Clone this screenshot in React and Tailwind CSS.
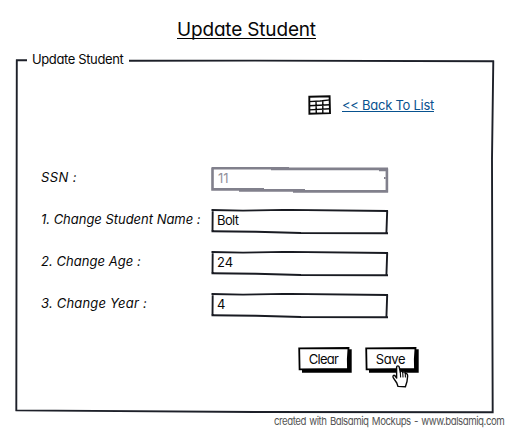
import React from "react";

// Slightly crooked outline of a text field, drawn behind its value.
function FieldOutline({ disabled }) {
  return (
    <svg className="absolute inset-0" width="178" height="27" viewBox="0 0 178 27" fill="none">
      {disabled ? (
        <g stroke="#81808c" strokeWidth="2.6">
          <path d="M0.5 1.3 H78 M60 1.9 H177 M175.9 1.5 V25.6 M1.5 1 V23.5 M0.3 22.4 H53 M28 23.4 H94 M82 24.4 H177" />
          <path d="M168 3.4 H175 M173.8 10 V12" strokeWidth="1.6" />
        </g>
      ) : (
        <g stroke="#191b22" strokeWidth="1.9">
          <path d="M0.5 1 L32 1.6 L75 0.9 L177 2 M176.2 1.6 L175.4 24.6 M1.7 1 L1.5 23 M0.5 22.3 L45 22.8 L90 24 L177 24.2" />
        </g>
      )}
    </svg>
  );
}

function Field({ label, labelClass, value, valueClass, disabled }) {
  return (
    <div className="flex h-[27px] items-start">
      <span className={"w-[170px] whitespace-nowrap italic " + labelClass}>{label}</span>
      <div className={"relative h-[27px] w-[178px] pt-px pl-[6px] " + (disabled ? "text-[#92919b]" : "")}>
        <FieldOutline disabled={disabled} />
        <span className={"relative block " + valueClass}>{value}</span>
      </div>
    </div>
  );
}

function Button({ children, className }) {
  return (
    <button className="relative h-[27px] w-[54px] pr-[3px] pb-[3px] text-center leading-[20px]">
      <svg className="absolute inset-0" width="54" height="27" viewBox="0 0 54 27">
        <path d="M4 3 L53.7 2.3 V25.8 H4 Z" fill="#000" />
        <path d="M1.2 1.3 L50.5 1 L49.8 12 L50 22 L1.6 22.4 Z" fill="#fff" stroke="#000" strokeWidth="1.8" />
      </svg>
      <span className={"relative " + className}>{children}</span>
    </button>
  );
}

function TableIcon() {
  return (
    <svg width="24" height="21" viewBox="0 0 24 21" fill="none" stroke="#080808">
      <path d="M1.3 1.8 L21.6 1.3 L22 18.1 L1.4 18.8 Z" strokeWidth="1.9" />
      <path d="M1 6.6 L12 6 L22 4.9 M1 10.8 L22 9.8 M1 14.9 L22 13.8 M8 6 L8.3 19 M14.8 5 L14.8 19" strokeWidth="1.4" />
    </svg>
  );
}

function HandCursor() {
  return (
    <svg className="absolute top-[18px] left-[27px]" width="17" height="24" viewBox="0 0 17 24" fill="#fff" stroke="#080808" strokeWidth="1.4" strokeLinejoin="round" strokeLinecap="round">
      <path d="M4.6 12.2 L4.6 2.2 C4.8 .5 6.8 .5 7.2 2 L8.3 7 C8.8 5.5 10 5.8 10.6 7.3 C12 6.4 13 7 13.3 8.4 C15 8.2 15.8 9.5 15.6 11.5 L15 16.5 L13.4 21.8 L6 21.4 L4.8 18 L1.2 12.6 C.5 10.5 1.9 9.8 2.9 10.7 L4.7 13" />
      <path d="M8.3 7 L8.6 12 M10.7 7.3 L11 12 M13.3 8.4 L13.4 12" strokeWidth="1.1" />
    </svg>
  );
}

function GroupOutline() {
  return (
    <svg className="absolute inset-0" width="480" height="355" viewBox="0 0 480 355" fill="none" stroke="#1d2029" strokeWidth="1.9">
      <path d="M1 1.3 H12 M114 1.7 L240 1.6 L479 2.3 M478.3 1.6 L477 100 L477.3 230 L477.7 353.6 M1.8 0.6 L1.3 352 M0.5 351.4 L240 353 L478.6 353.2" />
    </svg>
  );
}

export default function App() {
  return (
    <main className="flex h-[430px] w-[509px] flex-col overflow-hidden bg-white font-[Inter,sans-serif] text-[13px] leading-[20px] text-[#080808] [font-feature-settings:'cv11']">
      <h1 className="ml-[177px] flex h-[59px] items-start pt-[18px]">
        <span className="h-[21px] border-b border-black text-[19px] leading-[23px] whitespace-nowrap tracking-[-0.17px]">Update Student</span>
      </h1>
      <section className="relative ml-[15px] h-[355px] w-[480px]">
        <GroupOutline />
        <h2 className="relative -mt-[10px] ml-[17px] h-[20px] whitespace-nowrap tracking-[-0.38px]">Update Student</h2>
        <div className="relative mt-[26px] ml-[293px] flex h-[22px] gap-[10px]">
          <TableIcon />
          <a className="h-[17px] w-[92px] border-b border-[#08528f] whitespace-nowrap tracking-[-0.26px] text-[#08528f]">&lt;&lt; Back To List</a>
        </div>
        <form className="relative mt-[50px] ml-[26px] flex flex-col gap-[15px]">
          <Field label="SSN :" labelClass="tracking-[0.4px]" value="11" valueClass="pl-px" disabled />
          <Field label="1. Change Student Name :" labelClass="tracking-[-0.02px]" value="Bolt" valueClass="tracking-[-0.6px]" />
          <Field label="2. Change Age :" labelClass="tracking-[0.05px]" value="24" valueClass="" />
          <Field label="3. Change Year :" labelClass="tracking-[0.2px]" value="4" valueClass="" />
        </form>
        <div className="relative mt-[27px] ml-[283px] flex gap-[13px]">
          <Button className="tracking-[-0.7px]">Clear</Button>
          <div className="relative">
            <Button className="tracking-[-0.3px]">Save</Button>
            <HandCursor />
          </div>
        </div>
      </section>
      <footer className="ml-[274px] flex leading-[14px]">
        <span className="w-[231px] origin-left scale-x-[0.88] text-[11px] whitespace-nowrap tracking-[-0.53px] text-[#555] [word-spacing:1.2px]">
          created with Balsamiq Mockups - www.balsamiq.com
        </span>
      </footer>
    </main>
  );
}
